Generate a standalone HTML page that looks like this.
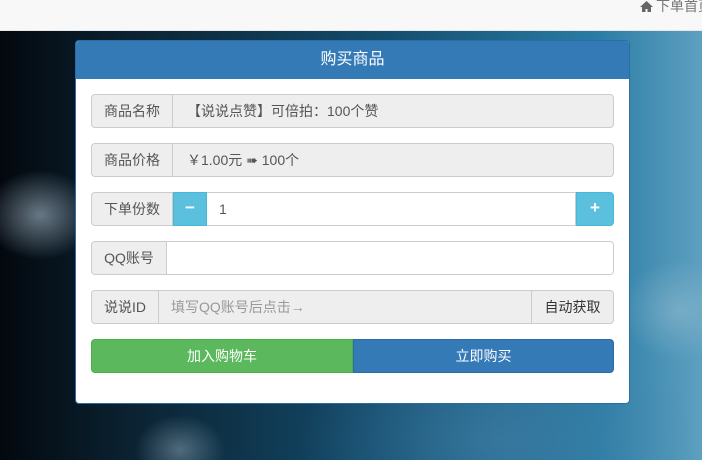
<!DOCTYPE html>
<html><head><meta charset="utf-8"><style>
*{box-sizing:border-box;margin:0;padding:0}
body{width:702px;height:460px;overflow:hidden;position:relative;font-family:"Liberation Sans","Noto Sans CJK SC",sans-serif;font-size:14px;color:#555;
background:radial-gradient(ellipse 55px 45px at 40px 215px,rgba(170,190,205,.6),transparent),
radial-gradient(ellipse 45px 35px at 180px 450px,rgba(160,185,200,.45),transparent),
radial-gradient(ellipse 60px 50px at 680px 310px,rgba(140,185,205,.6),transparent),
radial-gradient(ellipse 200px 120px at 500px 440px,rgba(70,130,170,.6),transparent),
linear-gradient(90deg,#03080e 0%,#0b2434 20%,#144d6e 55%,#2a7ca5 85%,#5ea0c0 100%);}
.top{position:absolute;left:0;top:0;width:702px;height:31px;background:#f8f8f8;border-bottom:1px solid #e7e7e7}
.top span{position:absolute;left:640px;top:-4px;font-size:14px;color:#777;white-space:nowrap}
.top b{display:inline-block;width:13px;height:11px;vertical-align:-1px;margin-right:3px}
.panel{position:absolute;left:75px;top:40px;width:555px;height:364px;background:#fff;border:1px solid #2e6da4;border-radius:4px;overflow:hidden}
.hd{height:38px;background:#337ab7;color:#fff;font-size:16px;text-align:center;line-height:38px}
.row{position:absolute;left:15px;width:523px;height:34px;display:flex;border-radius:4px}
.lab{background:#eee;border:1px solid #ccc;border-radius:4px 0 0 4px;line-height:32px;text-align:center;color:#555}
.val{flex:1;background:#eee;border:1px solid #ccc;border-left:0;border-radius:0 4px 4px 0;line-height:32px;padding-left:14px}
.inp{flex:1;background:#fff;border:1px solid #ccc;line-height:32px;padding-left:12px;color:#555}
.btn{background:#5bc0de;border:1px solid #46b8da;color:#fff;text-align:center;line-height:30px;font-size:17px;font-weight:bold}
</style></head><body>
<div class="top"><span><b><svg width="13" height="11" viewBox="0 0 13 11"><path d="M6.5 0L0 6h2v5h3.5V8h2v3H11V6h2z" fill="#666"/></svg></b>下单首页</span></div>
<div class="panel">
<div class="hd">购买商品</div>
<div class="row" style="top:53px"><div class="lab" style="width:82px">商品名称</div><div class="val">【说说点赞】可倍拍：100个赞</div></div>
<div class="row" style="top:102px"><div class="lab" style="width:82px">商品价格</div><div class="val">￥1.00元 ➠ 100个</div></div>
<div class="row" style="top:151px"><div class="lab" style="width:82px">下单份数</div><div class="btn" style="width:34px">−</div><div class="inp" style="border-left:0">1</div><div class="btn" style="width:38px;border-radius:0 4px 4px 0">+</div></div>
<div class="row" style="top:200px"><div class="lab" style="width:76px">QQ账号</div><div class="inp" style="border-left:0;border-radius:0 4px 4px 0"></div></div>
<div class="row" style="top:249px"><div class="lab" style="width:68px">说说ID</div><div class="val" style="border-radius:0;color:#999;padding-left:12px">填写QQ账号后点击→</div><div class="lab" style="width:82px;border-left:0;border-radius:0 4px 4px 0;color:#333">自动获取</div></div>
<div class="row" style="top:298px"><div style="width:262px;background:#5cb85c;border:1px solid #4cae4c;border-radius:4px 0 0 4px;color:#fff;text-align:center;line-height:32px">加入购物车</div><div style="flex:1;background:#337ab7;border:1px solid #2e6da4;border-radius:0 4px 4px 0;color:#fff;text-align:center;line-height:32px">立即购买</div></div>
</div>
</body></html>
